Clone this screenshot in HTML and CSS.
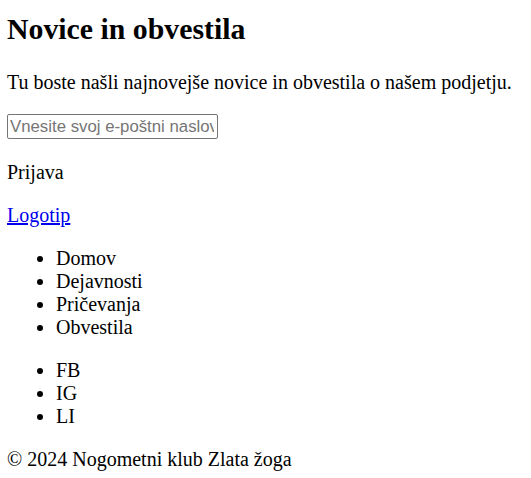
FILE: index.html
```html
<!DOCTYPE html>
<html lang="sl">
<head>
<meta charset="utf-8">
<title>Novice in obvestila</title>
<link rel="stylesheet" href="styles.css">
</head>
<body>
<section class="newsletter">
  <h1 class="title">Novice in obvestila</h1>
  <p class="lead">Tu boste našli najnovejše novice in obvestila o našem podjetju.</p>
  <form class="signup">
    <input class="email" type="email" placeholder="Vnesite svoj e-poštni naslov">
    <button class="submit" type="button">Prijava</button>
  </form>
</section>
<footer class="footer">
  <p class="logo"><a href="#">Logotip</a></p>
  <ul class="menu">
    <li>Domov</li>
    <li>Dejavnosti</li>
    <li>Pričevanja</li>
    <li>Obvestila</li>
  </ul>
  <ul class="menu">
    <li>FB</li>
    <li>IG</li>
    <li>LI</li>
  </ul>
  <p class="copy">© 2024 Nogometni klub Zlata žoga</p>
</footer>
</body>
</html>
```
FILE: styles.css
```css
html, body {
  background: #fff;
}
body {
  margin: 0;
  padding: 12px 7px 10px;
  font-family: "Liberation Serif", "Times New Roman", serif;
  font-size: 20px;
  line-height: 23px;
  color: #000;
}
.title {
  font-size: 29.8px;
  line-height: 34px;
  font-weight: bold;
  margin: 0 0 25px;
}
.lead {
  margin: 0 0 20px;
}
.signup {
  margin: 0 0 20px;
}
.email {
  display: block;
  box-sizing: border-box;
  width: 211px;
  height: 25px;
  margin: 0 0 22px;
  padding: 1px 3px 1px 2px;
  border: 1px solid #767676;
  border-radius: 2px;
  font-family: "Liberation Sans", Arial, sans-serif;
  font-size: 16.8px;
  color: #000;
  background: #fff;
}
.email::placeholder {
  color: #757575;
}
.submit {
  display: block;
  margin: 0;
  padding: 0;
  border: 0;
  background: none;
  font: inherit;
  color: inherit;
  line-height: 23px;
}
.logo {
  margin: 0 0 20px;
}
.logo a {
  color: #0000ee;
  text-decoration: underline;
}
.menu {
  margin: 0 0 20px;
  padding-left: 49px;
}
.copy {
  margin: 0;
}
```
